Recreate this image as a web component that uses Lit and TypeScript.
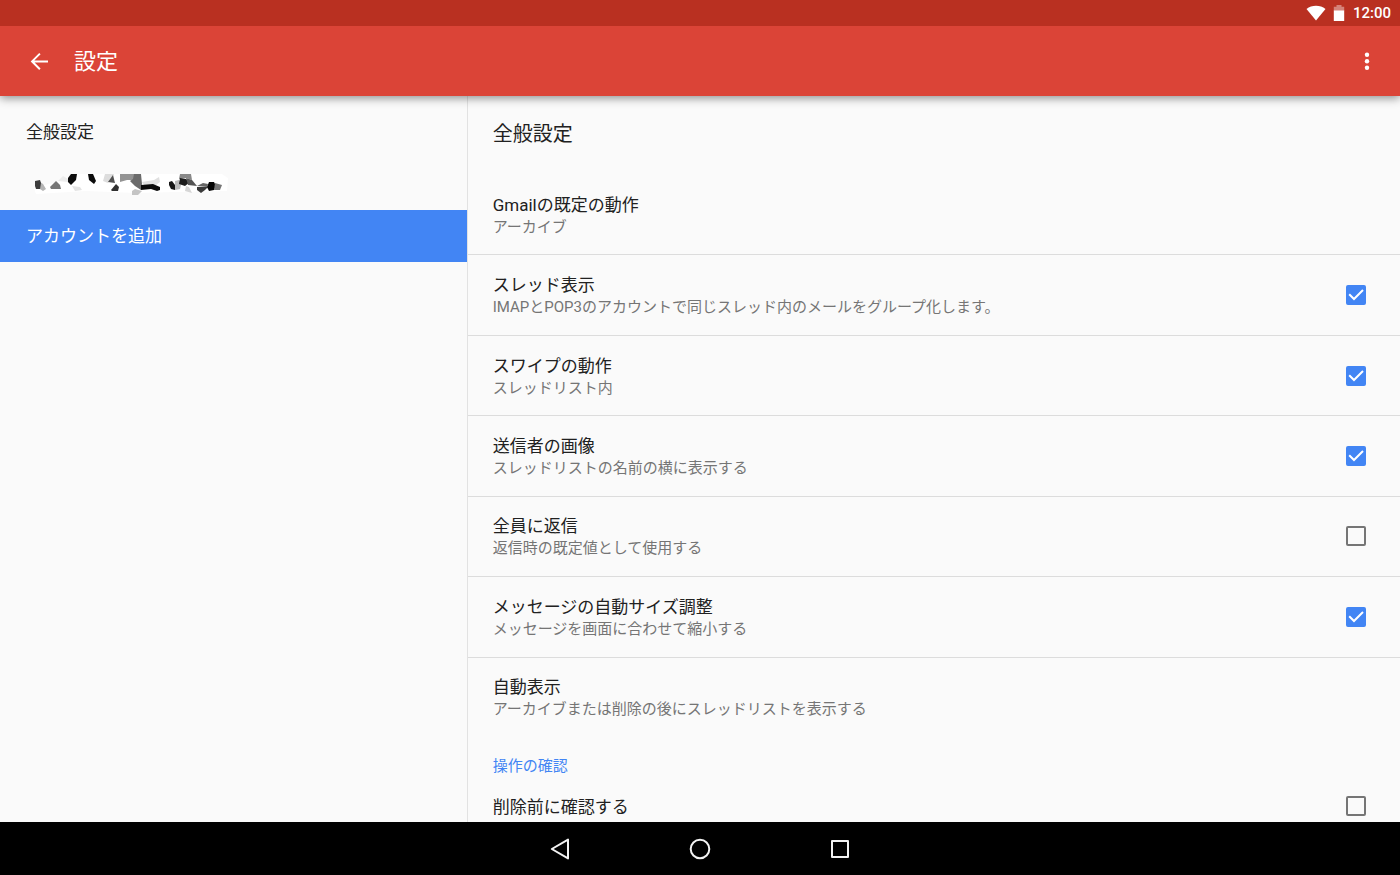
import { LitElement, html, svg, css, nothing } from "lit";
import { customElement, property } from "lit/decorators.js";

interface Setting {
  id: string;
  title: string;
  summary?: string;
  checked?: boolean;
}

const SETTINGS: Setting[] = [
  { id: "default-action", title: "Gmailの既定の動作", summary: "アーカイブ" },
  { id: "threads", title: "スレッド表示", summary: "IMAPとPOP3のアカウントで同じスレッド内のメールをグループ化します。", checked: true },
  { id: "swipe", title: "スワイプの動作", summary: "スレッドリスト内", checked: true },
  { id: "sender-image", title: "送信者の画像", summary: "スレッドリストの名前の横に表示する", checked: true },
  { id: "reply-all", title: "全員に返信", summary: "返信時の既定値として使用する", checked: false },
  { id: "auto-fit", title: "メッセージの自動サイズ調整", summary: "メッセージを画面に合わせて縮小する", checked: true },
  { id: "auto-advance", title: "自動表示", summary: "アーカイブまたは削除の後にスレッドリストを表示する" },
];

const CONFIRM: Setting[] = [{ id: "confirm-delete", title: "削除前に確認する", checked: false }];

/* Facets of the obscured account name: fill followed by polygon points. */
const FACETS: [string, string][] = [
  ["#fff", "8,15 30,9 50,1 196,1 202,5 201,18 150,19 110,20 60,18 10,21"],
  ["#b4b4b4", "14,9 17,11 20,16 17,18 14,16"],
  ["#3c3c3c", "9,8 14,7 15,10 14,16 10,16 9,13"],
  ["#777", "24,14 30,8 34,12 35,16 25,16"],
  ["#ececec", "32,8 37,3 42,6 42,9"],
  ["#e4e4e4", "46,13 54,14 56,17 49,18"],
  ["#0c0c0c", "45,1 51,1 50,7 45,12 42,9 42,5"],
  ["#0c0c0c", "62,1 67,1 70,8 68,11 63,7"],
  ["#ddd", "79,1 88,1 86,6 82,10 77,8"],
  ["#505050", "87,2 89,10 82,9"],
  ["#303030", "85,17 90,11 93,14 92,18 86,18"],
  ["#939393", "94,1 109,1 108,7 101,7 94,9"],
  ["#6b6b6b", "108,1 115,1 116,11 115,17 109,13 104,8 107,6"],
  ["#c4c4c4", "109,16 116,18 112,22 106,22 106,18"],
  ["#e0e0e0", "116,9 128,7 133,4 134,9 130,12 118,12"],
  ["#0a0a0a", "115,12 127,11 134,14 134,17 131,18 125,16 115,17"],
  ["#161616", "143,9 146,8 149,12 149,17 145,16 143,12"],
  ["#bbb", "149,8 153,7 155,12 154,16 149,17"],
  ["#888", "154,1 165,1 166,7 160,5 153,6"],
  ["#1b1b1b", "154,5 160,6 164,9 159,13 153,11"],
  ["#555", "160,5 166,7 171,13 162,12"],
  ["#d6d6d6", "160,13 163,14 166,20 159,18"],
  ["#666", "171,13 177,10 182,11 181,14"],
  ["#3a3a3a", "171,14 182,14 179,17 175,20 171,17"],
  ["#050505", "183,9 188,9 190,13 188,17 183,18 181,14"],
  ["#777", "189,10 196,12 194,17 188,17"],
];

@customElement("status-bar")
class StatusBar extends LitElement {
  static styles = css`
    :host {
      display: flex;
      align-items: center;
      justify-content: flex-end;
      flex: none;
      height: 26px;
      padding-right: 9px;
      background: #b93021;
      color: #fff;
      font-size: 15px;
      line-height: 28px;
      font-weight: 500;
      z-index: 2;
    }
    .wifi { width: 20px; height: 16px; margin-right: 7px; }
    .battery { width: 12px; height: 16px; margin-right: 8px; }
  `;
  render() {
    return html`
      <svg class="wifi" viewBox="0 0 20 16" aria-hidden="true">
        <path d="M0.5 3.9C5.8-.3 14.2-.3 19.5 3.9L10 15.5Z" fill="#fff"></path>
      </svg>
      <svg class="battery" viewBox="0 0 12 16" aria-hidden="true">
        <path d="M.8 1.8h2.7V0h5v1.8h2.7V6H.8z" fill="#d5837a"></path>
        <path d="M.8 5.5h10.4V16H.8z" fill="#fff"></path>
      </svg>
      <time>12:00</time>
    `;
  }
}

@customElement("app-bar")
class AppBar extends LitElement {
  static styles = css`
    :host {
      display: flex;
      align-items: center;
      flex: none;
      height: 70px;
      padding: 0 21px;
      box-sizing: border-box;
      background: #db4437;
      color: #fff;
      box-shadow: 0 2px 9px rgba(0, 0, 0, 0.45);
      z-index: 1;
    }
    .title { flex: 1; margin: 0 0 0 17px; padding-top: 2px; font-size: 22px; line-height: 32px; font-weight: 400; }
    .icon { display: grid; place-items: center; width: 36px; height: 36px; padding: 0; border: 0; background: none; color: inherit; }
    .more { width: 24px; }
  `;
  render() {
    return html`
      <button class="icon" aria-label="戻る">
        <svg width="20" height="20" viewBox="0 0 20 20" fill="none" stroke="#fff" stroke-width="2" aria-hidden="true">
          <path d="M19 10.4H3.2M10.9 2.6L3.1 10.4l7.8 7.8"></path>
        </svg>
      </button>
      <h1 class="title">設定</h1>
      <button class="icon more" aria-label="その他">
        <svg width="6" height="20" viewBox="0 0 6 20" fill="#fff" aria-hidden="true">
          <circle cx="3" cy="3.8" r="2.2"></circle><circle cx="3" cy="10.3" r="2.2"></circle><circle cx="3" cy="16.8" r="2.2"></circle>
        </svg>
      </button>
    `;
  }
}

@customElement("side-menu")
class SideMenu extends LitElement {
  static styles = css`
    :host { display: block; padding-top: 10px; }
    .item {
      display: flex;
      align-items: center;
      height: 52px;
      padding: 0 26px;
      color: #212121;
      font-size: 17px;
      line-height: 24px;
      text-decoration: none;
    }
    .selected { background: #4285f4; color: #fff; }
    .account { width: 202px; height: 22px; }
  `;
  render() {
    return html`
      <nav>
        <a class="item" href="#general">全般設定</a>
        <a class="item" href="#account" aria-label="アカウント">
          <svg class="account" viewBox="0 0 202 22" aria-hidden="true">
            ${FACETS.map(([fill, points]) => svg`<polygon fill=${fill} points=${points}></polygon>`)}
          </svg>
        </a>
        <a class="item selected" href="#add">アカウントを追加</a>
      </nav>
    `;
  }
}

@customElement("setting-row")
class SettingRow extends LitElement {
  @property({ attribute: false }) item!: Setting;
  static styles = css`
    :host { display: flex; }
    .row {
      display: flex;
      flex: 1;
      align-items: center;
      justify-content: space-between;
      padding: 0 34px 0 25px;
      border: 0;
      background: none;
      font: inherit;
      text-align: left;
    }
    .text { display: flex; flex-direction: column; padding-top: 2px; line-height: 22px; }
    .title { font-size: 17px; color: #212121; }
    .summary { font-size: 15px; color: #757575; }
    .check { display: grid; flex: none; width: 20px; height: 20px; }
    .box, .tick { grid-area: 1 / 1; width: 20px; height: 20px; }
    .box { appearance: none; box-sizing: border-box; margin: 0; border: 2px solid #757575; border-radius: 2px; }
    .box:checked { border-color: #4285f4; background: #4285f4; }
    .tick { visibility: hidden; pointer-events: none; }
    .box:checked + .tick { visibility: visible; }
  `;
  render() {
    const { id, title, summary, checked } = this.item;
    const text = html`<span class="text">
      <span class="title">${title}</span>
      ${summary ? html`<span class="summary">${summary}</span>` : nothing}
    </span>`;
    return checked === undefined
      ? html`<button class="row">${text}</button>`
      : html`<label class="row" for=${id}>
          ${text}
          <span class="check">
            <input class="box" type="checkbox" id=${id} .checked=${checked} />
            <svg class="tick" viewBox="0 0 20 20" fill="none" stroke="#fff" stroke-width="2" aria-hidden="true">
              <path d="M3.2 9.2l4.8 4.8L17 5"></path>
            </svg>
          </span>
        </label>`;
  }
}

@customElement("settings-panel")
class SettingsPanel extends LitElement {
  static styles = css`
    :host {
      display: flex;
      flex-direction: column;
      min-height: 0;
      overflow-y: auto;
      scrollbar-width: none;
      border-left: 1px solid #e2e2e2;
    }
    .heading { flex: none; margin: 0; padding: 23px 25px 25px; font-size: 20px; line-height: 30px; font-weight: 400; color: #212121; }
    .list { display: flex; flex-direction: column; flex: 1 0 auto; }
    .entry { flex: 1 0 80px; box-sizing: border-box; border-top: 1px solid #dcdcdc; }
    .entry:first-child { border-color: transparent; }
    .group { flex: 0 0 85px; min-height: 0; }
    .group-title { margin: 0; padding: 18px 25px 6px; font-size: 15px; line-height: 22px; font-weight: 400; color: #4285f4; }
    .single { height: 46px; }
  `;
  render() {
    return html`
      <h2 class="heading">全般設定</h2>
      <div class="list">${SETTINGS.map((s) => html`<setting-row class="entry" .item=${s}></setting-row>`)}</div>
      <section class="group">
        <h3 class="group-title">操作の確認</h3>
        ${CONFIRM.map((s) => html`<setting-row class="single" .item=${s}></setting-row>`)}
      </section>
    `;
  }
}

@customElement("nav-bar")
class NavBar extends LitElement {
  static styles = css`
    :host { display: flex; justify-content: center; align-items: center; gap: 92px; flex: none; height: 53px; background: #000; }
    .key { display: grid; place-items: center; width: 48px; height: 48px; padding: 0; border: 0; background: none; }
  `;
  render() {
    const icon = (label: string, shape: unknown) => html`<button class="key" aria-label=${label}>
      <svg width="24" height="24" viewBox="0 0 24 24" fill="none" stroke="#f2f2f2" stroke-width="2" stroke-linejoin="round" aria-hidden="true">${shape}</svg>
    </button>`;
    return html`
      ${icon("戻る", svg`<path d="M20 2.6v18.8L3.8 12z"></path>`)}
      ${icon("ホーム", svg`<circle cx="12" cy="12" r="9.3"></circle>`)}
      ${icon("履歴", svg`<rect x="4" y="4" width="16" height="16"></rect>`)}
    `;
  }
}

@customElement("app-root")
class AppRoot extends LitElement {
  static styles = css`
    :host {
      display: flex;
      flex-direction: column;
      height: 100vh;
      background: #fafafa;
      font-family: Roboto, "Noto Sans CJK JP", sans-serif;
    }
    .body { display: grid; grid-template-columns: minmax(0, 1fr) minmax(0, 2fr); grid-template-rows: minmax(0, 1fr); flex: 1; min-height: 0; }
  `;
  render() {
    return html`
      <status-bar></status-bar>
      <app-bar></app-bar>
      <main class="body">
        <side-menu></side-menu>
        <settings-panel></settings-panel>
      </main>
      <nav-bar></nav-bar>
    `;
  }
}
